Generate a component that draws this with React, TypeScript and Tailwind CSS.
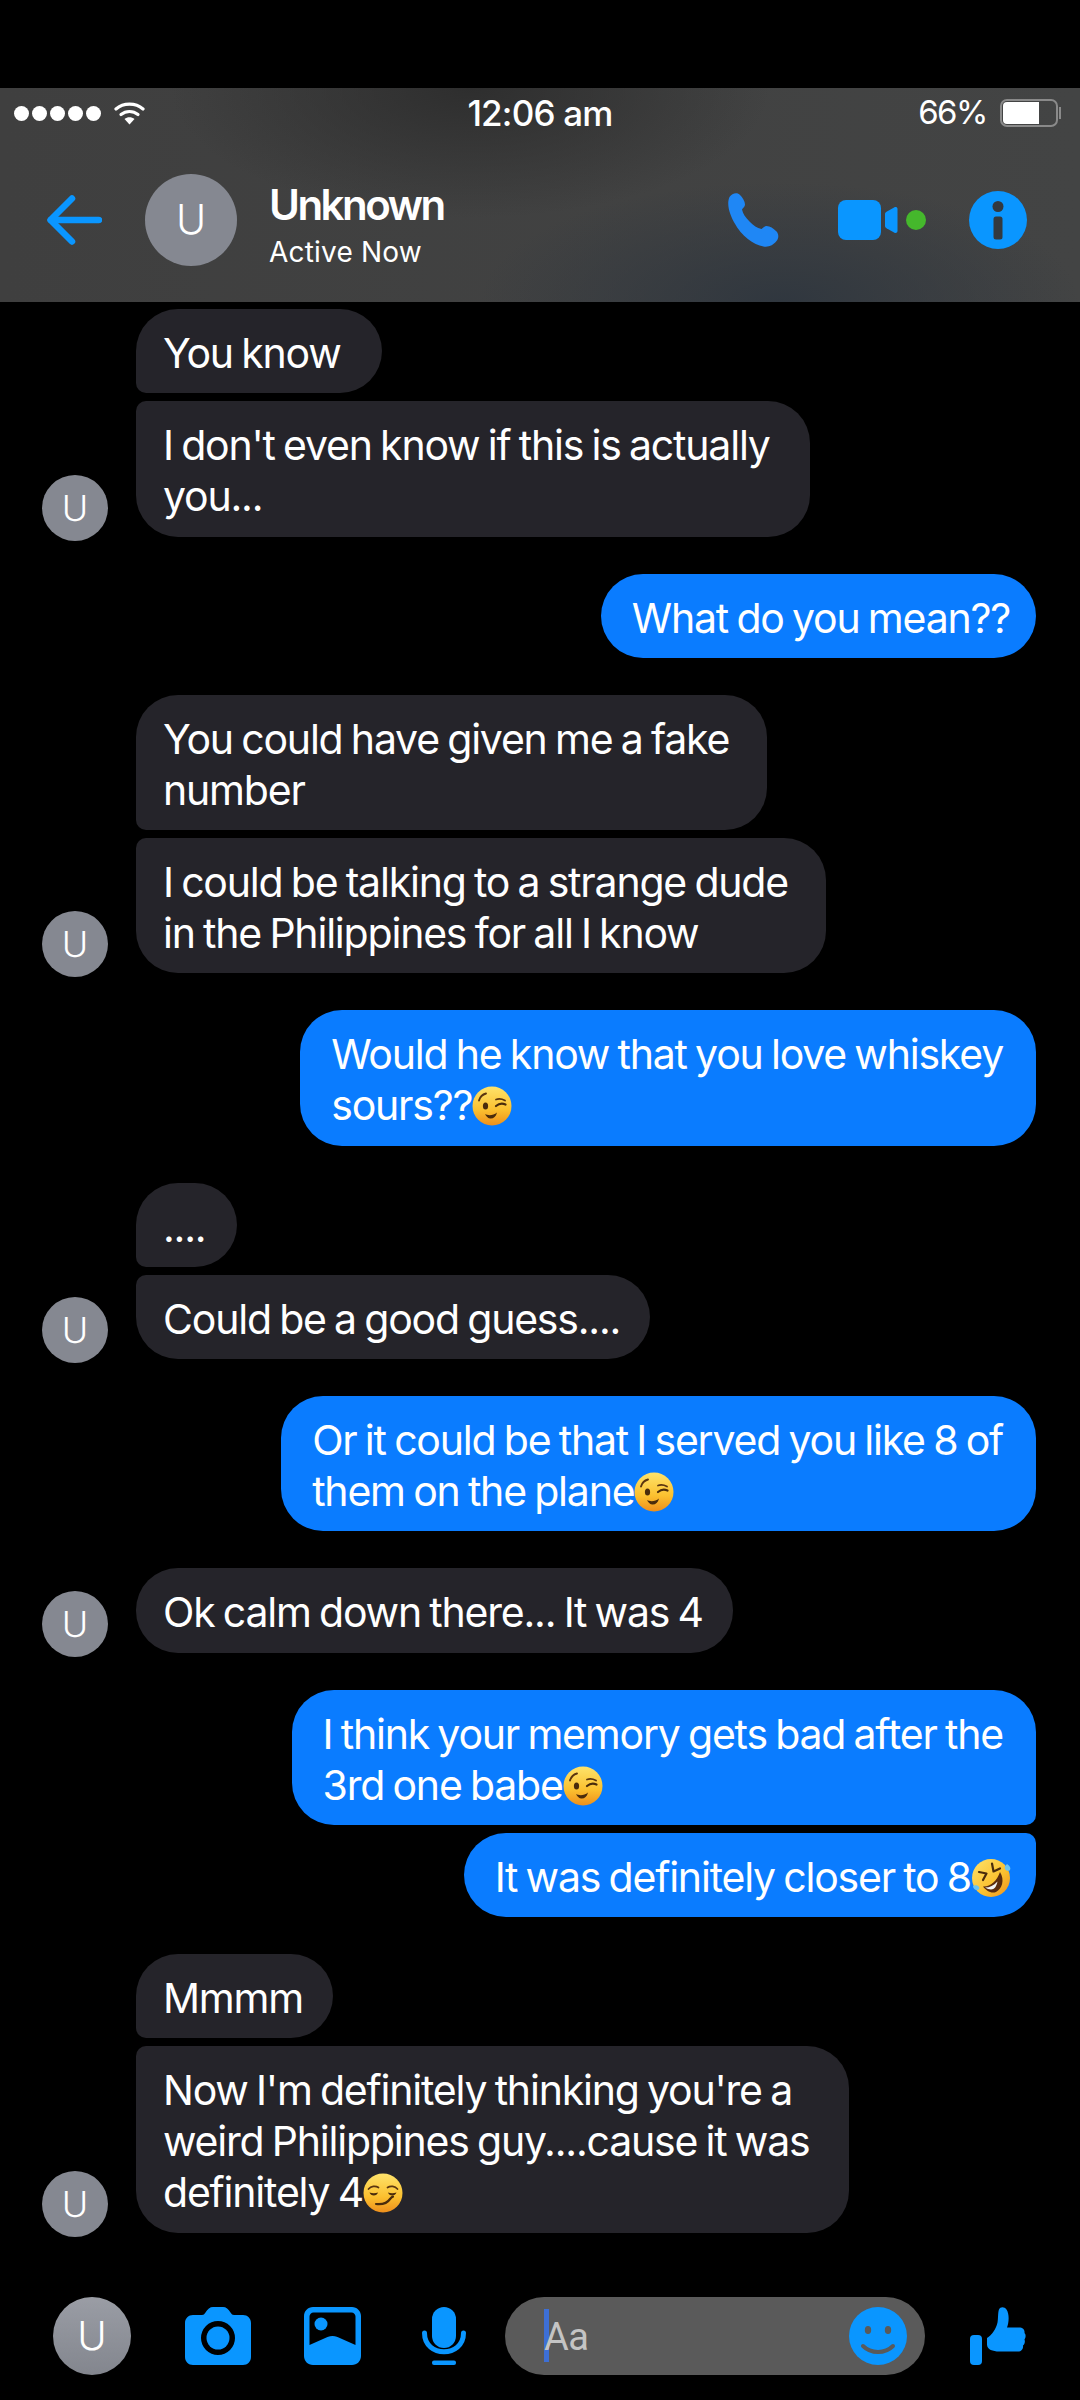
import type { ReactNode } from "react";

const BLUE = "#0a96ff";

const Wink = () => (
  <svg viewBox="0 0 40 40" className="inline-block w-[40px] h-[40px] align-[-6px]">
    <defs>
      <linearGradient id="winkFace" x1="0" y1="0" x2="0" y2="1">
        <stop offset="0" stopColor="#fee36b" />
        <stop offset="0.6" stopColor="#fbc02f" />
        <stop offset="1" stopColor="#ee8f1c" />
      </linearGradient>
    </defs>
    <circle cx="20" cy="20" r="19.5" fill="url(#winkFace)" />
    <ellipse cx="13.500" cy="20" rx="2.600" ry="3.600" fill="#4a2c0c" />
    <path d="M7 14.500c1-3.500 3.500-6 7-7" stroke="#5a3510" strokeWidth="1.900" fill="none" strokeLinecap="round" />
    <path d="M24 20c3-2.500 6-3 9.500-1.500" stroke="#4a2c0c" strokeWidth="2.200" fill="none" strokeLinecap="round" />
    <path d="M24 13.500c3-1 6-.6 9 1" stroke="#5a3510" strokeWidth="1.800" fill="none" strokeLinecap="round" />
    <path d="M13 28c2.500 1.500 8 2 12-1.500-1 4.500-4 6.500-7 6-2.500-.4-4-2.500-5-4.500z" fill="#4a2c0c" />
  </svg>
);

const Smirk = () => (
  <svg viewBox="0 0 40 40" className="inline-block w-[40px] h-[40px] align-[-6px]">
    <defs>
      <linearGradient id="smirkFace" x1="0" y1="0" x2="0" y2="1">
        <stop offset="0" stopColor="#fee36b" />
        <stop offset="0.6" stopColor="#fbc02f" />
        <stop offset="1" stopColor="#ee8f1c" />
      </linearGradient>
    </defs>
    <circle cx="20" cy="20" r="19.5" fill="url(#smirkFace)" />
    <path d="M5.500 16c2.500-3 7-3.500 10-1.500M24.500 14.500c3-2 7.500-1.500 10 1.500" stroke="#5a3510" strokeWidth="1.700" fill="none" strokeLinecap="round" />
    <path d="M6.500 19.500c2.800 1 6 1 8.500 0-.6 2-2.200 3-4.200 3s-3.600-1-4.300-3zM25 19.500c2.500 1 5.700 1 8.500 0-.7 2-2.300 3-4.300 3s-3.600-1-4.200-3z" fill="#4a2c0c" />
    <path d="M13 31c6 .8 11-.5 14.500-5.500.8-1 1.500-1.600 2.500-1.800" stroke="#4a2c0c" strokeWidth="2.200" fill="none" strokeLinecap="round" />
  </svg>
);

const Rofl = () => (
  <svg viewBox="0 0 40 40" className="inline-block w-[40px] h-[40px] align-[-6px]">
    <defs>
      <linearGradient id="roflFace" x1="0" y1="0" x2="1" y2="1">
        <stop offset="0" stopColor="#fee36b" />
        <stop offset="0.6" stopColor="#fbc02f" />
        <stop offset="1" stopColor="#ee8f1c" />
      </linearGradient>
    </defs>
    <circle cx="20" cy="20" r="19" fill="url(#roflFace)" />
    <path d="M8 14l7.500 1.500-3.500 6.500M21 5.500l1.500 8 6.500-3" stroke="#4a2c0c" strokeWidth="2.200" fill="none" strokeLinecap="round" strokeLinejoin="round" />
    <path d="M12 28.500c7 .5 14-5.500 17-14.500 5 8 2 17-4 20-5 2-10-1.500-13-5.500z" fill="#5a2c0e" />
    <path d="M14 29.500c5 0 8.500-2 12.500-6-1 5-3 8-6.500 8-2 0-4-1-6-2z" fill="#f4f4f4" />
    <path d="M36 6c3 2 4 4 3 6-1 1.500-4 1-5-1-1-1.500 0-3 2-5zM2 28c2-1 5-1 6 1 1 1.500 0 3-2 3-2.500 0-4-2-4-4z" fill="#6cc4f0" />
  </svg>
);

const PersonDisc = ({ size, text }: { size: string; text: string }) => (
  <div className={`${size} ${text} shrink-0 rounded-full bg-[#858891] flex items-center justify-center text-white font-light`}>
    U
  </div>
);

type BubbleProps = {
  lines: ReactNode[];
  corners: string;
  pad?: string;
  mine?: boolean;
};

const Bubble = ({ lines, corners, pad, mine }: BubbleProps) => (
  <div
    className={`${corners} ${pad} ${mine ? "bg-[#0a7cff] pl-[31px]" : "bg-[#25242a] pl-[27px]"} pt-[19px] pb-[14.25px] text-[41px] leading-[51px] tracking-[-1.2px] [word-spacing:-2px] text-white whitespace-nowrap`}
  >
    {lines.map((line, i) => (
      <div key={i} className="h-[51px]">
        {line}
      </div>
    ))}
  </div>
);

const Received = ({ lines, corners, pad = "pr-[38px]", avatar }: BubbleProps & { avatar?: boolean }) => (
  <div className="flex items-end pl-[42px] gap-[28px]">
    {avatar ? (
      <div className="mb-[-4px]">
        <PersonDisc size="w-[66px] h-[66px]" text="text-[36px]" />
      </div>
    ) : (
      <div className="w-[66px] shrink-0" />
    )}
    <Bubble lines={lines} corners={corners} pad={pad} />
  </div>
);

const Sent = ({ lines, corners, pad = "pr-[33px]" }: BubbleProps) => (
  <div className="flex justify-end pr-[44px]">
    <Bubble mine lines={lines} corners={corners} pad={pad} />
  </div>
);

const StatusBar = () => (
  <div className="relative flex items-center justify-between h-[50px] pl-[14px] pr-[19px] text-white">
    <div className="flex items-center gap-[3px]">
      {[0, 1, 2, 3, 4].map((dot) => (
        <span key={dot} className="w-[15px] h-[15px] rounded-full bg-white" />
      ))}
      <svg viewBox="0 0 31 24" className="ml-[10px] w-[31px] h-[24px]" fill="none" stroke="#fff" strokeWidth="3.200" strokeLinecap="round">
        <path d="M2 8C9.500 1.500 21.500 1.500 29 8" />
        <path d="M7 13.500C12 9.500 19 9.500 24 13.500" />
        <path d="M15.500 23.500l-5-5.500c2.800-2.200 7.200-2.200 10 0z" fill="#fff" stroke="none" />
      </svg>
    </div>
    <div className="absolute left-0 right-0 text-center text-[35px] font-medium tracking-[-0.8px]">12:06 am</div>
    <div className="flex items-center gap-[13px]">
      <span className="text-[33px] tracking-[-1.500px]">66%</span>
      <div className="flex items-center gap-[1px]">
        <div className="w-[58px] h-[28px] rounded-[7px] border-2 border-[#8a8a8a] p-[1px]">
          <div className="w-[36px] h-full rounded-l-[4px] bg-white" />
        </div>
        <div className="w-[2px] h-[12px] bg-[#8a8a8a]" />
      </div>
    </div>
  </div>
);

const Header = () => (
  <header className="mt-[88px] h-[214px] overflow-hidden bg-[radial-gradient(ellipse_300px_130px_at_470px_0px,#2e2e2e,transparent),radial-gradient(ellipse_300px_120px_at_780px_214px,#30373f,transparent),linear-gradient(to_right,#3f3f3f,#434444)]">
    <StatusBar />
    <div className="flex items-center h-[114px] mt-[25px]">
      <svg viewBox="0 0 55 50" className="ml-[47px] w-[55px] h-[50px]" fill="none" stroke={BLUE} strokeWidth="6.500" strokeLinecap="round" strokeLinejoin="round">
        <path d="M52 25H4" />
        <path d="M25 3.500L3.500 25 25 46.500" />
      </svg>
      <div className="ml-[43px]">
        <PersonDisc size="w-[92px] h-[92px]" text="text-[41px]" />
      </div>
      <div className="ml-[32px] pt-[10px] flex-1 text-white">
        <div className="text-[42px] leading-[50px] font-semibold tracking-[-2.500px]">Unknown</div>
        <div className="mt-[4px] text-[28px] leading-[36px] tracking-[0.2px]">Active Now</div>
      </div>
      <svg viewBox="0 0 52 54" className="w-[53px] h-[54px]" fill="#1f87f5">
        <path d="M2 4c2.500-4 8-5 10.500-2 2.500 2.500 5 6 5 9.500 0 2-2 3.500-3 5 1 4.500 3.500 8 7.500 12 4 4 7.500 6.500 12 7.500 1.500-1 3-3 5-3 3.500 0 7 2.500 9.500 5 3 2.500 3 7.500.5 10-3 4-8 6.500-13 5.500C26 52 14 43 7 30 3 23-1.500 12 2 4z" />
      </svg>
      <svg viewBox="0 0 60 40" className="ml-[58px] w-[60px] h-[40px]" fill={BLUE}>
        <rect x="0" y="0" width="43" height="40" rx="8" />
        <path d="M47 14c0-1 .6-1.600 1.500-2.200l8-4.500c1.200-.6 3 0 3 1.700v22c0 1.700-1.800 2.300-3 1.700l-8-4.500c-.9-.6-1.500-1.200-1.500-2.200z" />
      </svg>
      <span className="ml-[8px] w-[20px] h-[20px] rounded-full bg-[#45b82c]" />
      <svg viewBox="0 0 58 58" className="ml-[43px] mr-[53px] w-[58px] h-[58px]">
        <circle cx="29" cy="29" r="29" fill={BLUE} />
        <circle cx="29" cy="15.500" r="5.500" fill="#33393f" />
        <rect x="24.500" y="25.500" width="9" height="23" rx="2.500" fill="#33393f" />
      </svg>
    </div>
  </header>
);

const Composer = () => (
  <div className="flex items-center h-[78px]">
    <div className="ml-[53px] w-[78px] h-[78px] rounded-full bg-gradient-to-b from-[#9a9da5] to-[#83868e] flex items-center justify-center text-white text-[40px] font-light">
      U
    </div>
    <svg viewBox="0 0 66 58" className="ml-[54px] w-[66px] h-[58px]" fill={BLUE}>
      <path fillRule="evenodd" d="M8 8h9c1.500 0 2.500-.8 3.500-2.500C22.500 2 25 0 28 0h10c3 0 5.500 2 7.500 5.500C46.500 7.200 47.500 8 49 8h9c4.500 0 8 3.500 8 8v34c0 4.500-3.500 8-8 8H8c-4.500 0-8-3.500-8-8V16c0-4.500 3.500-8 8-8zm25 6a17 17 0 1 0 0 34 17 17 0 0 0 0-34z" />
      <circle cx="33" cy="31" r="11.500" />
    </svg>
    <svg viewBox="0 0 57 58" className="ml-[53px] w-[57px] h-[58px]" fill={BLUE}>
      <path fillRule="evenodd" d="M9 0h39c5 0 9 4 9 9v40c0 5-4 9-9 9H9c-5 0-9-4-9-9V9c0-5 4-9 9-9zM5.500 38l18-8c3.500-1.500 6.500-1.500 10 0l18 8V9.500c0-2.200-1.800-4-4-4h-38c-2.200 0-4 1.800-4 4z" />
      <circle cx="17" cy="17" r="6.500" />
    </svg>
    <svg viewBox="0 0 44 58" className="ml-[61px] w-[44px] h-[58px]" fill="none" stroke={BLUE}>
      <rect x="10" y="0" width="24" height="41" rx="12" fill={BLUE} stroke="none" />
      <path d="M2.500 26c0 25 39 25 39 0" strokeWidth="5" strokeLinecap="round" />
      <rect x="10" y="53.500" width="24" height="4.500" rx="2" fill={BLUE} stroke="none" />
    </svg>
    <div className="ml-[39px] w-[420px] h-[78px] rounded-full bg-[#5a5a5a] flex items-center pl-[39px] pr-[18px]">
      <span className="w-[5px] h-[53px] bg-[#3d6fd6] shrink-0" />
      <span className="ml-[-5px] pt-[4px] flex-1 text-[#c4c4c4] text-[38px] tracking-[-0.5px] font-['Roboto',sans-serif]">Aa</span>
      <svg viewBox="0 0 58 58" className="w-[58px] h-[58px]">
        <circle cx="29" cy="29" r="29" fill={BLUE} />
        <ellipse cx="19" cy="23" rx="3.200" ry="4" fill="#5a5a5a" />
        <ellipse cx="39" cy="23" rx="3.200" ry="4" fill="#5a5a5a" />
        <path d="M14 39c8 8 22 8 30 0" stroke="#5a5a5a" strokeWidth="4" fill="none" strokeLinecap="round" />
      </svg>
    </div>
    <svg viewBox="0 0 57 58" className="ml-[45px] w-[57px] h-[58px]" fill={BLUE}>
      <rect x="0" y="28" width="12" height="30" rx="4" />
      <path d="M17 31c5-3 9-9 10.500-15.500.8-4 .3-10 1.500-13 1.200-3 5.500-3 7.500 0 3 4.500 2.500 13 .5 18h12c4 0 6 2.500 5.500 5.500 1.500 1.500 1.500 4.500 0 6.500.8 2 .3 4.500-1.500 6 .5 3-1.500 6-5 6H29c-6 0-12-2-12-7z" />
    </svg>
  </div>
);

const App = () => (
  <div className="w-[1080px] h-[2400px] bg-black overflow-hidden font-['Inter',sans-serif]">
    <Header />
    <main className="flex flex-col pt-[7px]">
      <div className="flex flex-col gap-[8px]">
        <Received lines={["You know"]} corners="rounded-[42px] rounded-bl-[10px]" pad="pr-[41px]" />
        <Received avatar lines={["I don't even know if this is actually", "you..."]} corners="rounded-[42px] rounded-tl-[10px]" pad="pr-[40px]" />
      </div>
      <div className="mt-[37px]">
        <Sent lines={["What do you mean??"]} corners="rounded-[42px]" pad="pr-[26px]" />
      </div>
      <div className="mt-[37px] flex flex-col gap-[8px]">
        <Received lines={["You could have given me a fake", "number"]} corners="rounded-[42px] rounded-bl-[10px]" />
        <Received avatar lines={["I could be talking to a strange dude", "in the Philippines for all I know"]} corners="rounded-[42px] rounded-tl-[10px]" />
      </div>
      <div className="mt-[37px]">
        <Sent lines={["Would he know that you love whiskey", <>sours??<Wink /></>]} corners="rounded-[42px]" />
      </div>
      <div className="mt-[37px] flex flex-col gap-[8px]">
        <Received lines={["...."]} corners="rounded-[42px] rounded-bl-[10px]" pad="pr-[32px]" />
        <Received avatar lines={["Could be a good guess...."]} corners="rounded-[42px] rounded-tl-[10px]" pad="pr-[30px]" />
      </div>
      <div className="mt-[37px]">
        <Sent lines={["Or it could be that I served you like 8 of", <>them on the plane<Wink /></>]} corners="rounded-[42px]" />
      </div>
      <div className="mt-[37px]">
        <Received avatar lines={["Ok calm down there... It was 4"]} corners="rounded-[42px]" pad="pr-[30px]" />
      </div>
      <div className="mt-[37px] flex flex-col gap-[8px]">
        <Sent lines={["I think your memory gets bad after the", <>3rd one babe<Wink /></>]} corners="rounded-[42px] rounded-br-[10px]" />
        <Sent lines={[<>It was definitely closer to 8<Rofl /></>]} corners="rounded-[42px] rounded-tr-[10px]" pad="pr-[25px]" />
      </div>
      <div className="mt-[37px] flex flex-col gap-[8px]">
        <Received lines={["Mmmm"]} corners="rounded-[42px] rounded-bl-[10px]" pad="pr-[30px]" />
        <Received avatar lines={["Now I'm definitely thinking you're a", "weird Philippines guy....cause it was", <>definitely 4<Smirk /></>]} corners="rounded-[42px] rounded-tl-[10px]" pad="pr-[40px]" />
      </div>
    </main>
    <div className="mt-[64px]">
      <Composer />
    </div>
  </div>
);

export default App;
